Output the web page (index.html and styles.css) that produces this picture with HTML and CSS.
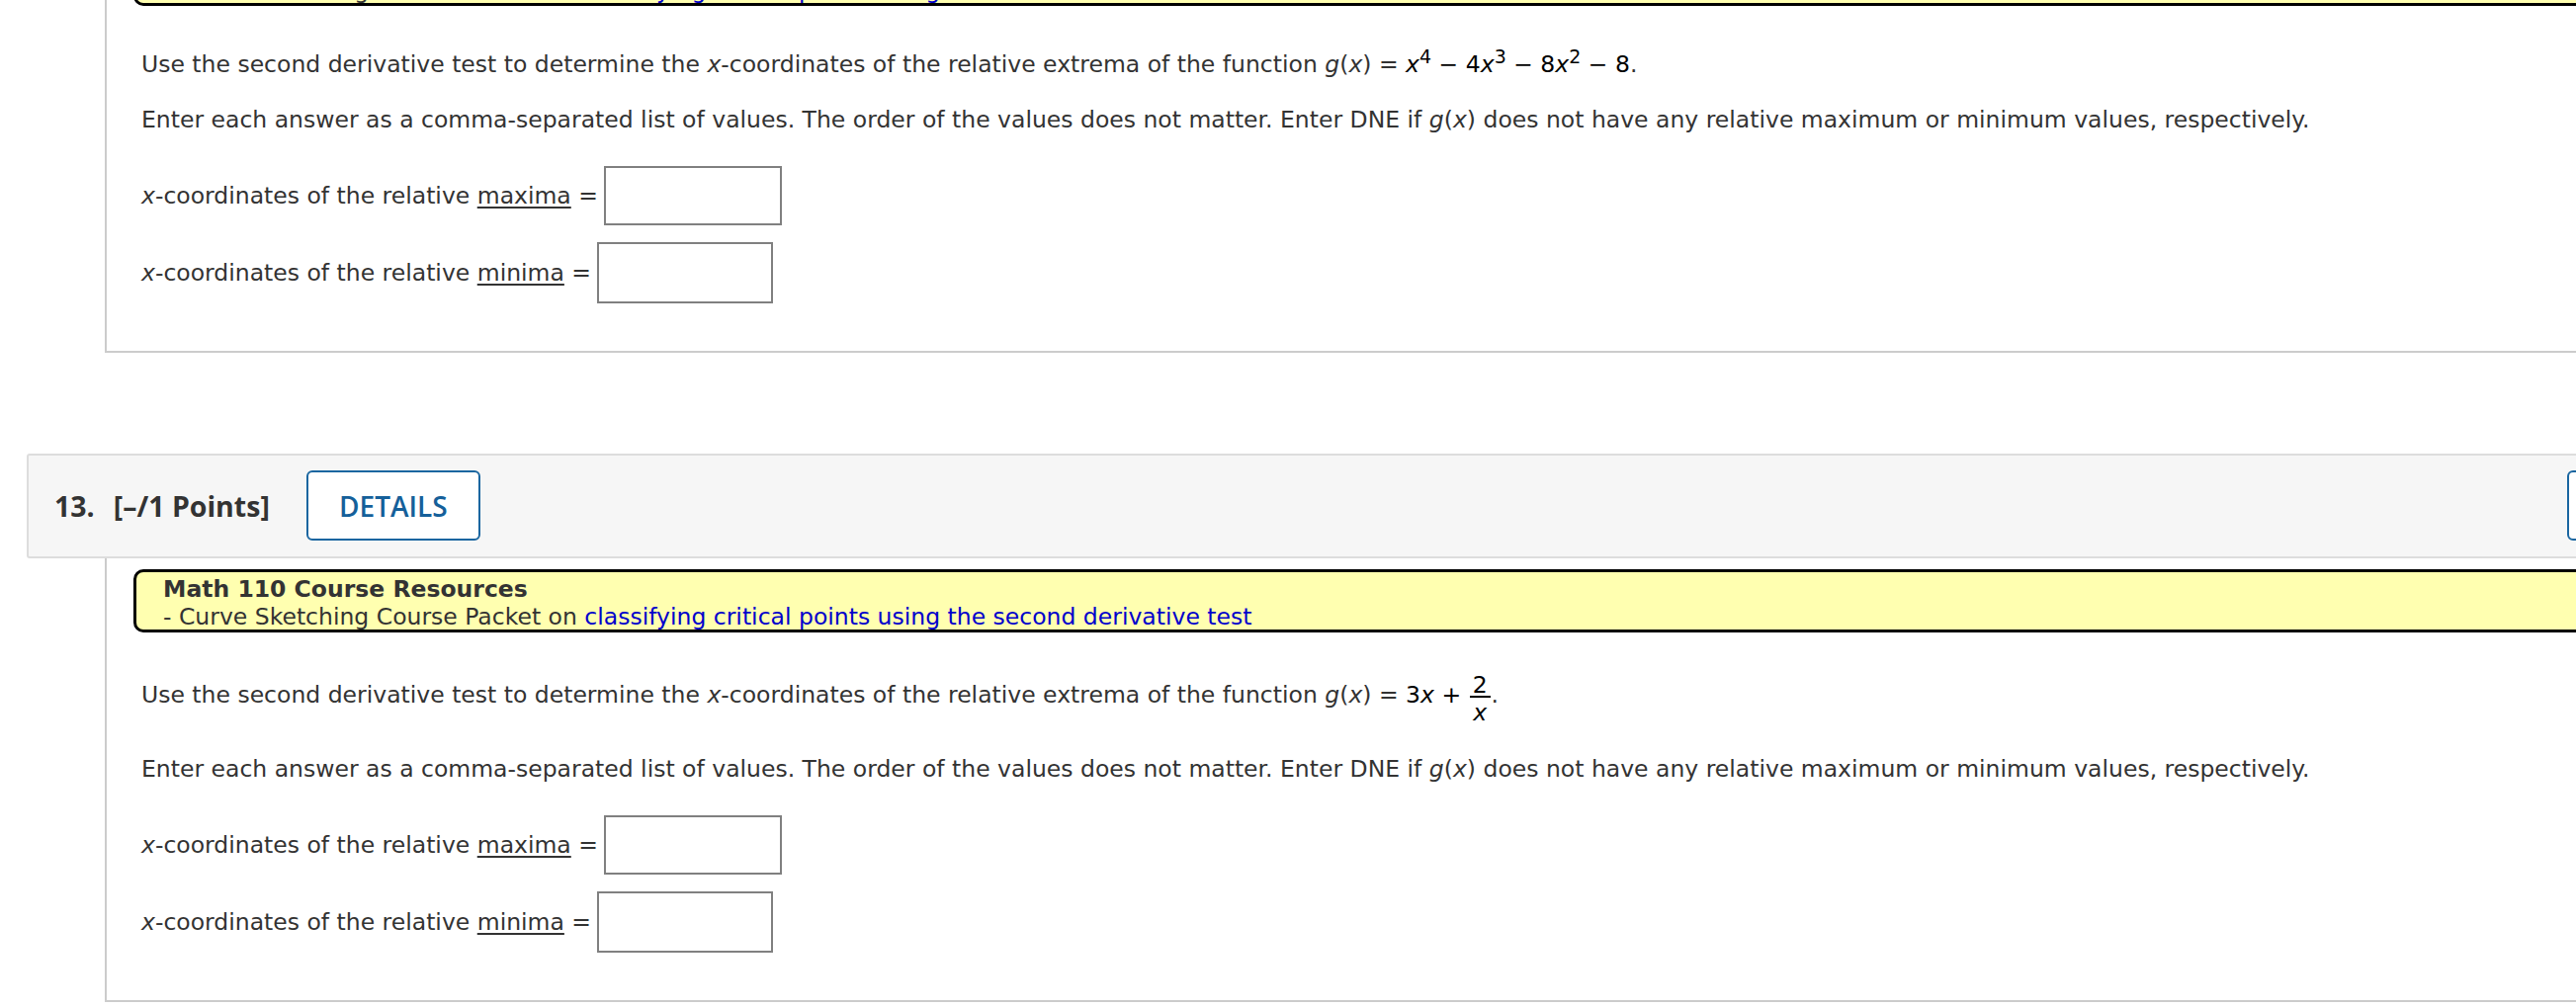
FILE: index.html
```html
<!DOCTYPE html>
<html lang="en">
<head>
<meta charset="utf-8">
<title>Questions</title>
<link rel="stylesheet" href="styles.css">
</head>
<body>
<div class="page">
  <div class="question question-prev">
    <div class="qbody">
      <div class="resources">
        <div class="res-title">Math 110 Course Resources</div>
        <div class="res-line">- Curve Sketching Course Packet on <a href="#">classifying critical points using the second derivative test</a></div>
      </div>
      <div class="qtext">
        <p class="line">Use the second derivative test to determine the <i>x</i>-coordinates of the relative extrema of the function <i>g</i>(<i>x</i>) = <span class="math"><i>x</i><sup>4</sup> &minus; 4<i>x</i><sup>3</sup> &minus; 8<i>x</i><sup>2</sup> &minus; 8</span>.</p>
        <p class="line">Enter each answer as a comma-separated list of values. The order of the values does not matter. Enter DNE if <i>g</i>(<i>x</i>) does not have any relative maximum or minimum values, respectively.</p>
        <div class="answer-row"><span class="label"><i>x</i>-coordinates of the relative <u>maxima</u> =</span><input class="ans" type="text"></div>
        <div class="answer-row answer-row-min"><span class="label"><i>x</i>-coordinates of the relative <u>minima</u> =</span><input class="ans ans-min" type="text"></div>
      </div>
    </div>
  </div>

  <div class="question">
    <div class="qhead">
      <div class="qhead-left">
        <span class="qnum">13.</span>
        <span class="pts">[&ndash;/1 Points]</span>
        <span class="btn">DETAILS</span>
      </div>
      <div class="qhead-right">
        <span class="btn btn-right">MY NOTES</span>
        <span class="btn btn-right">ASK YOUR TEACHER</span>
      </div>
    </div>
    <div class="qbody">
      <div class="resources">
        <div class="res-title">Math 110 Course Resources</div>
        <div class="res-line">- Curve Sketching Course Packet on <a href="#">classifying critical points using the second derivative test</a></div>
      </div>
      <div class="qtext">
        <p class="line">Use the second derivative test to determine the <i>x</i>-coordinates of the relative extrema of the function <i>g</i>(<i>x</i>) = <span class="math">3<i>x</i> + <span class="frac"><span class="num">2</span><span class="den"><i>x</i></span></span></span>.</p>
        <p class="line">Enter each answer as a comma-separated list of values. The order of the values does not matter. Enter DNE if <i>g</i>(<i>x</i>) does not have any relative maximum or minimum values, respectively.</p>
        <div class="answer-row"><span class="label"><i>x</i>-coordinates of the relative <u>maxima</u> =</span><input class="ans" type="text"></div>
        <div class="answer-row answer-row-min"><span class="label"><i>x</i>-coordinates of the relative <u>minima</u> =</span><input class="ans ans-min" type="text"></div>
      </div>
    </div>
  </div>
</div>
</body>
</html>
```

FILE: styles.css
```css
* { box-sizing: border-box; }

html, body {
  margin: 0;
  padding: 0;
  background: #ffffff;
}

body {
  width: 2606px;
  height: 1020px;
  overflow: hidden;
  font-family: "DejaVu Sans", Verdana, sans-serif;
  color: #333333;
}

.page {
  width: 2900px;
  margin-top: -69px;
}

.question {
  margin-left: 27px;
}

.question + .question {
  margin-top: 102px;
}

/* header bar */
.qhead {
  display: flex;
  align-items: center;
  height: 106px;
  background: #f6f6f6;
  border: 2px solid #dddddd;
  border-radius: 3px;
  padding-left: 26px;
  font-family: "Open Sans", "DejaVu Sans", sans-serif;
  color: #333333;
}

.qhead-left {
  display: flex;
  align-items: center;
  width: 2542px;
  flex: none;
}

.qhead-right {
  display: flex;
  align-items: center;
  gap: 20px;
}

.qnum {
  font-size: 28.5px;
  font-weight: 700;
}

.pts {
  margin-left: 19px;
  font-size: 28.5px;
  font-weight: 700;
}

.btn {
  display: flex;
  align-items: center;
  justify-content: center;
  margin-left: 37px;
  height: 71px;
  width: 176px;
  border: 2px solid #1a66a0;
  border-radius: 6px;
  background: #ffffff;
  color: #15609a;
  font-size: 28px;
  font-weight: 600;
}

.btn-right {
  margin-left: 0;
  width: auto;
  padding: 0 30px;
}

/* question body */
.qbody {
  margin-left: 79px;
  border: 2px solid #cccccc;
  border-top: 0;
  padding: 11px 0 48px 27px;
}

.resources {
  background: #ffffb0;
  border: 3px solid #000000;
  border-radius: 10px;
  padding: 3px 0 0 27px;
  height: 64px;
  font-size: 23.5px;
  line-height: 28px;
  color: #333333;
}

.res-title {
  font-weight: 700;
}

.res-line a {
  color: #0000cc;
  text-decoration: none;
}

.qtext {
  padding-left: 8px;
  font-size: 23.5px;
  line-height: 32px;
}

.line {
  margin: 42px 0 0 0;
}

.line + .line {
  margin-top: 24px;
}

.math {
  color: #000000;
}

sup {
  font-size: 19px;
  line-height: 1;
  vertical-align: super;
}

.frac {
  display: inline-block;
  vertical-align: -18px;
  text-align: center;
  margin: 0 1px;
}

.num {
  display: block;
  line-height: 22px;
  padding: 0 3px;
  border-bottom: 2px solid #000000;
}

.den {
  display: block;
  line-height: 30px;
  padding-bottom: 2px;
}

.answer-row {
  display: flex;
  align-items: center;
  margin-top: 31px;
}

.answer-row-min {
  margin-top: 17px;
}

.label u {
  text-decoration-thickness: 2px;
  text-underline-offset: 3px;
}

.ans {
  margin: 0 0 0 6px;
  width: 180px;
  height: 60px;
  border: 2px solid #808080;
  background: #ffffff;
  padding: 0;
  outline: none;
}

.ans-min {
  width: 178px;
  height: 62px;
}
```
